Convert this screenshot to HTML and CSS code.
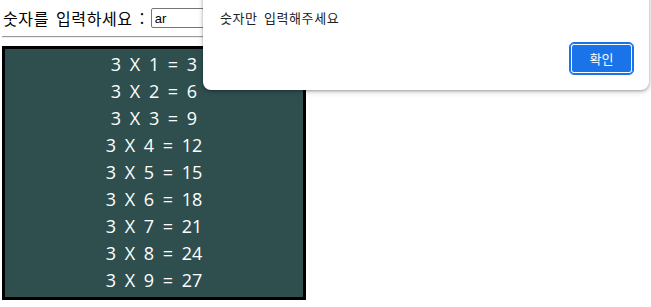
FILE: index.html
```html
<!DOCTYPE html>
<html lang="ko">
<head>
<meta charset="utf-8">
<link rel="stylesheet" href="styles.css">
</head>
<body>
<div class="prompt">
  <label class="label" for="num">숫자를 입력하세요 :</label>
  <input id="num" class="field" type="text" value="ar">
</div>
<hr class="rule">
<div class="table">
  <div class="row">3 X 1 = 3</div>
  <div class="row">3 X 2 = 6</div>
  <div class="row">3 X 3 = 9</div>
  <div class="row">3 X 4 = 12</div>
  <div class="row">3 X 5 = 15</div>
  <div class="row">3 X 6 = 18</div>
  <div class="row">3 X 7 = 21</div>
  <div class="row">3 X 8 = 24</div>
  <div class="row">3 X 9 = 27</div>
</div>
<div class="dialog">
  <div class="message">숫자만 입력해주세요</div>
  <div class="actions"><button class="ok">확인</button></div>
</div>
</body>
</html>
```

FILE: styles.css
```css
html, body {
  margin: 0;
  padding: 0;
  background: #fff;
}
body {
  padding: 0 2px;
  font-family: "Noto Sans CJK KR", "Noto Sans", sans-serif;
  position: relative;
  width: 647px;
  height: 307px;
  overflow: hidden;
}
.prompt {
  display: flex;
  align-items: center;
  height: 36px;
  padding-left: 1px;
}
.label {
  font-size: 16px;
  color: #000;
  letter-spacing: 0.6px;
  word-spacing: 2px;
  margin-right: 6px;
}
.field {
  width: 140px;
  height: 20px;
  box-sizing: border-box;
  border: 1px solid #767676;
  border-radius: 2px;
  padding: 0 3px;
  font-family: "Liberation Sans", Arial, sans-serif;
  font-size: 13px;
  margin: 0;
}
.rule {
  margin: 0;
  border: none;
  border-top: 1px solid #9a9a9a;
  border-bottom: 1px solid #eeeeee;
  height: 0;
}
.table {
  margin-top: 8px;
  width: 298px;
  border: 3px solid #000;
  background: #2f4f4f;
  color: #fff;
  padding: 2px 0 3px;
  font-family: "Open Sans", "Noto Sans", sans-serif;
  font-size: 18px;
  line-height: 27px;
  word-spacing: 4px;
  text-align: center;
}
.dialog {
  position: absolute;
  left: 203px;
  top: -10px;
  width: 446px;
  height: 100px;
  background: #fff;
  border-radius: 8px;
  box-shadow: 0 1px 3px rgba(0,0,0,0.3), 0 2px 6px rgba(0,0,0,0.15);
  box-sizing: border-box;
  padding: 20px 16px 0 17px;
}
.message {
  font-size: 13px;
  color: #202124;
  line-height: 16px;
  letter-spacing: 0.6px;
  word-spacing: 2px;
}
.actions {
  display: flex;
  justify-content: flex-end;
  margin-top: 17px;
}
.ok {
  background: #1a73e8;
  color: #fff;
  border: none;
  border-radius: 4px;
  width: 63px;
  height: 31px;
  font-family: "Noto Sans CJK KR", sans-serif;
  font-size: 13px;
  box-shadow: inset 0 0 0 1px #1a73e8, inset 0 0 0 2px #fff;
  outline: 1px solid #1a73e8;
}
```
